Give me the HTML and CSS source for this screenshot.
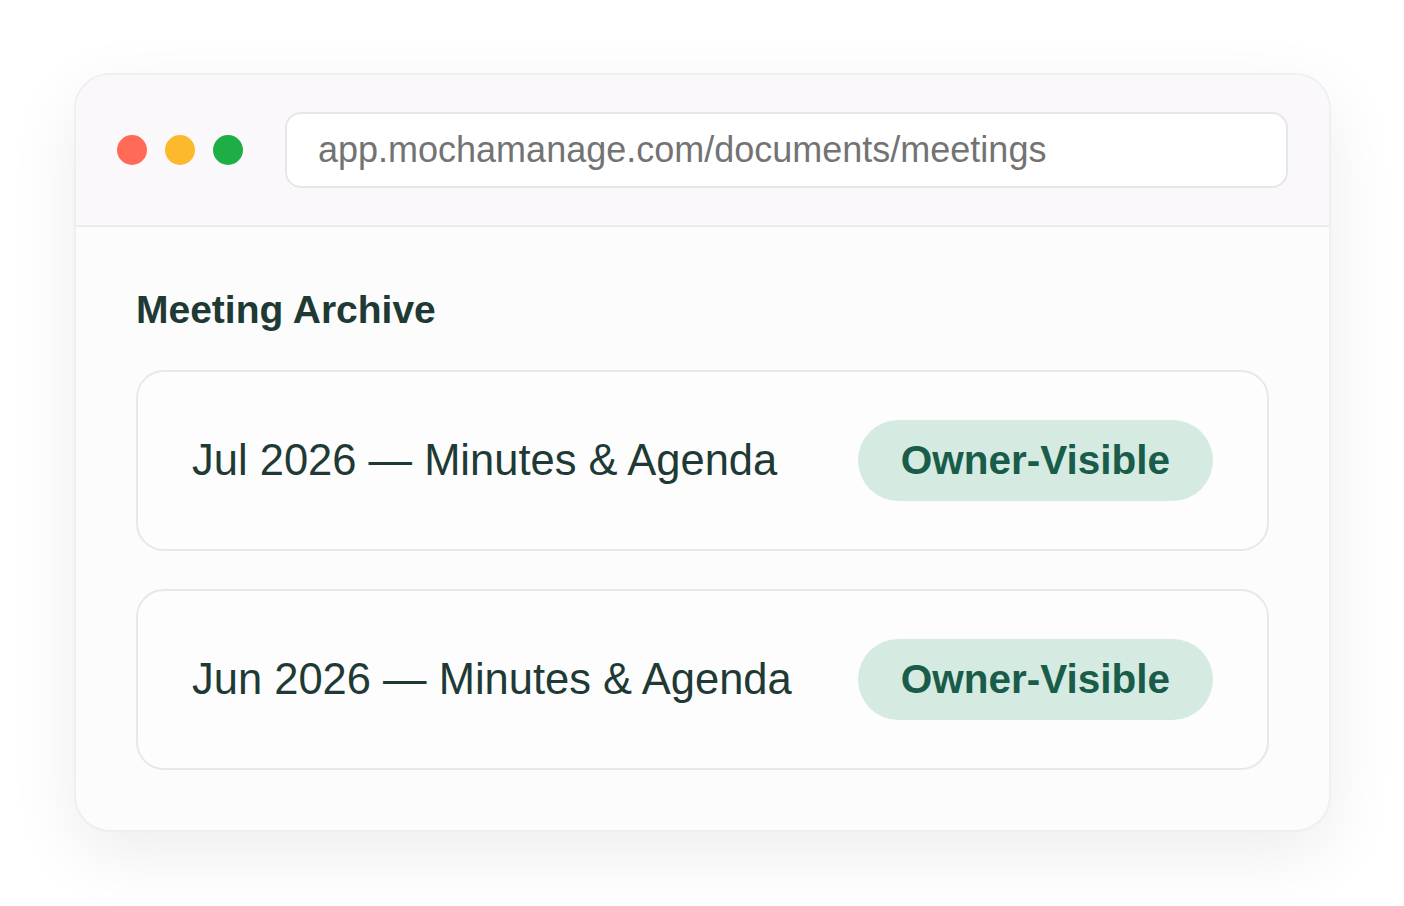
FILE: index.html
```html
<!DOCTYPE html>
<html lang="en">
<head>
    <meta charset="UTF-8">
    <meta name="viewport" content="width=device-width, initial-scale=1.0">
    <title>Meeting Archive</title>
    <link rel="stylesheet" href="styles.css">
</head>
<body>
    <div class="window">
        <div class="window-bar">
            <div class="dots">
                <span class="dot dot-red"></span>
                <span class="dot dot-yellow"></span>
                <span class="dot dot-green"></span>
            </div>
            <div class="address">app.mochamanage.com/documents/meetings</div>
        </div>

        <div class="window-body">
            <h1>Meeting Archive</h1>

            <div class="doc-list">
                <div class="doc-row">
                    <span class="doc-name">Jul 2026 — Minutes &amp; Agenda</span>
                    <span class="badge">Owner-Visible</span>
                </div>
                <div class="doc-row">
                    <span class="doc-name">Jun 2026 — Minutes &amp; Agenda</span>
                    <span class="badge">Owner-Visible</span>
                </div>
            </div>
        </div>
    </div>
</body>
</html>
```

FILE: styles.css
```css
html {
    height: 100%;
}

body {
    font-family: "Liberation Sans", Arial, sans-serif;
    margin: 0;
    min-height: 100%;
    box-sizing: border-box;
    padding: 73px 0 0 74px;
    background-color: #fff;
    color: #1f3a35;
}

.window {
    width: 1257px;
    box-sizing: border-box;
    background: #fcfcfd;
    border: 2px solid #efeef1;
    border-radius: 36px;
    box-shadow: 0 22px 70px rgba(0, 0, 0, 0.075);
    overflow: hidden;
}

.window-bar {
    display: flex;
    align-items: center;
    gap: 42px;
    padding: 37px 41px 37px 41px;
    background: #faf8fb;
    border-bottom: 2px solid #eceaee;
}

.dots {
    display: flex;
    gap: 18px;
}

.dot {
    width: 30px;
    height: 30px;
    border-radius: 50%;
}

.dot-red { background: #ff6b57; }
.dot-yellow { background: #fdb92c; }
.dot-green { background: #1eae46; }

.address {
    flex: 1;
    height: 76px;
    box-sizing: border-box;
    display: flex;
    align-items: center;
    padding-left: 31px;
    background: #fff;
    border: 2px solid #e7e5e9;
    border-radius: 16px;
    font-size: 36px;
    color: #737373;
}

.window-body {
    padding: 60px 60px 60px 60px;
}

h1 {
    font-size: 39px;
    line-height: 45px;
    font-weight: bold;
    margin: 0 0 38px 0;
    color: #1f3a35;
}

.doc-list {
    display: flex;
    flex-direction: column;
    gap: 38px;
}

.doc-row {
    display: flex;
    justify-content: space-between;
    align-items: center;
    height: 181px;
    box-sizing: border-box;
    padding: 0 54px 0 54px;
    background: #fdfdfd;
    border: 2px solid #e8e7ea;
    border-radius: 28px;
}

.doc-name {
    font-size: 43.5px;
    color: #1f3a35;
}

.badge {
    display: flex;
    align-items: center;
    height: 81px;
    padding: 0 43px;
    background: #d5ebe2;
    border-radius: 41px;
    font-size: 40.5px;
    font-weight: bold;
    color: #1a5c4a;
}
```
